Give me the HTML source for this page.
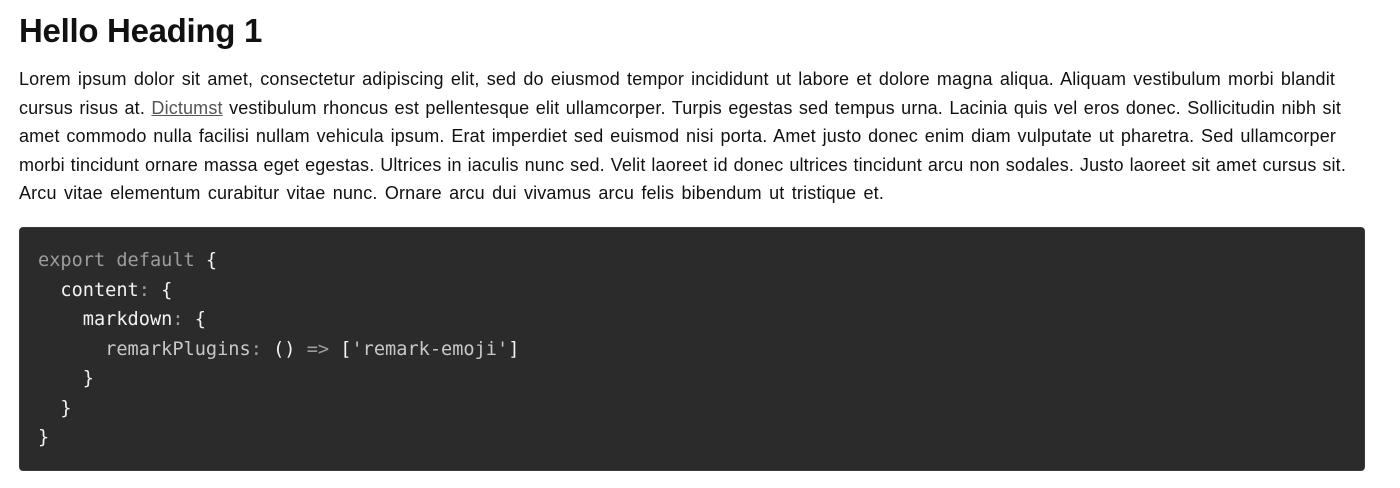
<!DOCTYPE html>
<html><head><meta charset="utf-8"><style>
body{margin:0;background:#fff;width:1400px;height:488px;overflow:hidden;font-family:"Liberation Sans",sans-serif;color:#111}
h1{position:absolute;left:19px;top:10px;margin:0;font-size:33px;line-height:42px;font-weight:bold;letter-spacing:-0.3px}
.p{position:absolute;left:19px;top:65px;font-size:18px;letter-spacing:0.15px;line-height:28.6px}
.p div{white-space:nowrap;text-align:justify;text-align-last:justify}
.p a{color:#555;text-decoration:underline}
pre{position:absolute;left:19px;top:227px;width:1346px;height:244px;box-sizing:border-box;margin:0;background:#2b2b2b;border:1px solid #3a3a3a;border-radius:4px;padding:18px 18px;font-family:"DejaVu Sans Mono",monospace;font-size:18.6px;line-height:29.5px;color:#f2f2f2}
.g{color:#9c9c9c}.l{color:#c8c8c8}
</style></head><body>
<h1>Hello Heading 1</h1>
<div class="p">
<div style="width:1316px">Lorem ipsum dolor sit amet, consectetur adipiscing elit, sed do eiusmod tempor incididunt ut labore et dolore magna aliqua. Aliquam vestibulum morbi blandit</div>
<div style="width:1322px">cursus risus at. <a>Dictumst</a> vestibulum rhoncus est pellentesque elit ullamcorper. Turpis egestas sed tempus urna. Lacinia quis vel eros donec. Sollicitudin nibh sit</div>
<div style="width:1317px">amet commodo nulla facilisi nullam vehicula ipsum. Erat imperdiet sed euismod nisi porta. Amet justo donec enim diam vulputate ut pharetra. Sed ullamcorper</div>
<div style="width:1327px">morbi tincidunt ornare massa eget egestas. Ultrices in iaculis nunc sed. Velit laoreet id donec ultrices tincidunt arcu non sodales. Justo laoreet sit amet cursus sit.</div>
<div style="width:865px">Arcu vitae elementum curabitur vitae nunc. Ornare arcu dui vivamus arcu felis bibendum ut tristique et.</div>
</div>
<pre><span class="g">export default</span> {
  content<span class="g">:</span> {
    markdown<span class="g">:</span> {
      <span class="l">remarkPlugins</span><span class="g">:</span> () <span class="g">=&gt;</span> [<span class="l">'remark-emoji'</span>]
    }
  }
}</pre>
</body></html>
